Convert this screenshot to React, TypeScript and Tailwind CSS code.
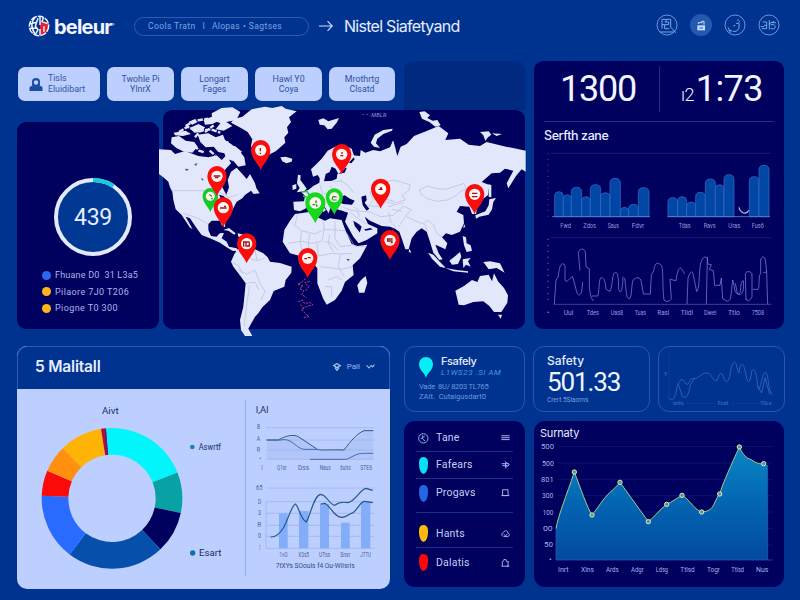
import React from "react";

type Label = [string, number, number, number];

/* Chart captions: text, left edge, baseline, width */
function Labels({ items, size, className }: { items: Label[]; size: number; className: string }) {
  return (
    <g className={className} fontSize={size} fontFamily="Roboto, sans-serif">
      {items.map(([t, x, y, w], i) => (
        <text key={i} x={x} y={y} textLength={w} lengthAdjust="spacingAndGlyphs">
          {t}
        </text>
      ))}
    </g>
  );
}

function Pin({ x, y, color = "#fb0d0d", s = 1, children }: { x: number; y: number; color?: string; s?: number; children?: React.ReactNode }) {
  return (
    <g transform={`translate(${x} ${y}) scale(${s})`}>
      <path d="M0 0C-6 -18 -29 -34 -29 -60A29 30 0 1 1 29 -60C29 -34 6 -18 0 0Z" fill={color} />
      <circle cx="0" cy="-59" r="17" fill="#fff4ee" />
      <g fill="none" stroke={color === "#fb0d0d" ? "#9b1420" : "#168a2a"} strokeWidth="4">
        {children}
      </g>
    </g>
  );
}

function WorldMap() {
  return (
    <svg viewBox="24 30 1086 657" className="block h-[219px] w-[362px] overflow-visible">
      <g fill="#e2e7fb">
        {/* North America */}
        <path d="M12 148L48 150 60 162 90 153 130 168 160 172 185 166 200 180 215 165 228 190 214 205 200 222 192 246 200 258 214 284 222 262 218 240 228 215 245 203 262 222 275 237 285 222 300 250 304 264 314 280 296 282 288 272 270 285 262 295 245 305 235 325 225 345 212 355 210 382 200 375 195 362 170 362 160 372 160 390 168 408 185 410 195 398 207 400 200 415 215 425 222 440 245 445 250 454 232 452 215 442 195 428 165 415 140 405 125 385 105 355 92 350 113 388 104 382 80 345 62 328 55 300 52 275 45 262 40 245 25 232 12 222Z" />
        {/* Arctic islands */}
        <path d="M50 112L72 108 92 122 118 126 128 140 112 158 84 154 64 144 48 130ZM56 98L92 92 108 102 84 108 60 106ZM104 84L130 72 150 82 142 96 118 98ZM146 60L176 48 196 60 172 72 150 74ZM170 40L200 24 232 22 256 36 244 60 214 66 232 78 206 92 182 88 196 70 172 60ZM128 104L160 100 182 112 204 104 210 120 228 132 250 148 268 172 272 196 250 200 236 184 214 176 208 160 190 156 176 140 152 142 136 126ZM210 142L240 138 262 156 240 162ZM100 66L118 58 128 66 112 74Z" />
        <path d="M72 96L98 80 122 92M92 78L120 62 160 56M120 112L136 92 168 88 196 98M150 96L176 76M118 136L132 152 150 158M164 152L180 166M60 128L80 132 104 148M196 120L220 128" fill="none" stroke="#e2e7fb" strokeWidth="7" strokeDasharray="16 4" />
        {/* Greenland and Iceland */}
        <path d="M228 68L238 56 262 50 290 28 330 20 352 24 380 18 392 26 425 34 402 52 408 66 396 82 400 98 388 112 391 128 376 142 362 154 340 165 330 186 318 200 306 180 300 160 288 138 292 118 278 96 258 84Z" />
        <path d="M376 172L392 170 412 176 410 185 394 190 382 184Z" />
        {/* Caribbean */}
        <path d="M205 390L222 384 242 400 238 404 220 392ZM248 400L268 404 270 412 250 410Z" />
        {/* South America */}
        <path d="M238 462L248 448 272 440 300 448 325 460 338 472 345 485 375 489 410 500 409 518 392 540 388 560 356 573 345 600 322 622 310 640 300 650 290 668 280 686 292 708 270 708 258 690 255 660 265 620 270 570 272 550 250 520 235 500 228 485Z" />
        {/* Africa and Madagascar */}
        <path d="M420 342L447 338 475 334 487 352 510 362 525 355 560 360 572 392 590 432 607 438 637 434 615 475 593 496 596 525 570 546 560 572 540 600 515 614 504 595 487 550 487 505 475 490 455 465 435 468 405 460 383 425 388 390 405 362Z" />
        <path d="M632 528L637 548 628 578 612 578 607 556 618 540Z" />
        {/* British Isles, Svalbard */}
        <path d="M429 224L437 226 436 240 448 256 455 266 447 274 425 277 434 264 426 250ZM412 256L424 252 424 266 413 270Z" />
        <path d="M490 60L505 55 520 64 552 54 545 68 530 86 518 88 508 76 494 74Z" />
        {/* Scandinavia */}
        <path d="M468 208L482 194 500 176 518 152 540 140 562 134 590 146 598 170 580 190 566 210 550 222 542 206 530 200 524 216 512 222 508 240 496 238 488 225 474 230Z" />
      </g>
      <g transform="translate(555 0)">
        <g fill="#e2e7fb">
          {/* Eurasia */}
          <path d="M-138 330L-140 305 -108 304 -105 288 -116 276 -95 270 -80 258 -62 248 -60 230 -50 232 -47 244 -24 242 -10 236 -8 222 14 218 20 204 2 200 10 184 34 190 44 178 38 166 60 168 62 150 76 158 100 150 120 154 150 142 158 124 148 128 160 122 166 144 172 168 182 140 200 132 222 108 258 94 296 78 325 100 316 120 360 116 386 134 420 138 440 126 498 140 530 146 557 152 557 215 545 208 530 225 505 265 500 250 520 212 495 206 480 218 455 220 425 246 448 255 444 285 425 300 412 322 408 342 396 342 388 320 360 318 350 335 370 345 372 370 360 395 335 405 318 400 306 412 322 430 316 448 300 440 286 434 296 460 308 478 298 480 280 458 270 425 260 395 245 385 230 395 215 415 206 448 196 448 188 424 178 395 165 386 150 380 125 378 90 362 74 350 84 372 112 385 112 400 80 420 56 430 40 410 15 365 24 338 0 330 -12 336 -28 322 -34 340 -48 318 -62 306 -42 330 -50 336 -74 310 -92 310 -104 326 -120 334Z" />
          {/* Novaya Zemlya, Severnaya Zemlya */}
          <path d="M92 128L104 104 130 90 158 86 156 92 130 102 112 116 108 130 120 144 102 140ZM238 36L254 34 270 46 262 54 278 62 292 60 302 76 286 80 268 66 246 56ZM420 96L446 94 454 104 444 112 436 122 430 106ZM456 100L486 102 470 108Z" />
          {/* Japan and Sakhalin */}
          <path d="M446 252L454 256 454 292 446 290ZM448 298L468 294 460 306 456 328 446 344 418 350 408 356 406 346 436 334 446 316Z" />
          {/* Islands of South-East Asia */}
          <path d="M264 458L280 464 300 486 318 504 300 500 276 476ZM316 504L350 510 384 514 384 518 340 514ZM328 482L346 468 360 456 364 470 354 492 336 494ZM368 408L378 412 380 430 392 436 396 452 380 456 372 436ZM368 478L392 474 384 484 392 500 378 494 370 504ZM430 486L450 484 480 490 494 518 470 504 446 508ZM208 446L214 458 206 456ZM372 372L376 380 370 384Z" />
          {/* Australia and Tasmania */}
          <path d="M346 572L372 558 396 540 412 546 420 528 446 524 456 544 462 520 474 544 492 564 504 586 502 608 484 636 462 636 448 618 430 604 400 606 372 616 356 614ZM474 644L486 644 482 656Z" />
        </g>
        {/* Inland seas and gulfs */}
        <g fill="#00005f">
          <path d="M-6 294L14 286 30 296 44 302 36 314 10 312-4 306ZM64 290L78 286 80 300 74 308 88 326 80 332 68 316ZM56 372L74 388 92 384 100 390 76 404 60 398 44 378 40 362ZM-24 322L-2 330-8 344-24 340ZM-44 236L-30 228-16 238-34 242Z" />
          <path d="M12 360L24 388 50 428 44 430 18 392 8 366Z" />
        </g>
        <path d="M66 376L76 392 100 388 108 392 78 408 58 402Z" fill="#e2e7fb" />
        <g fill="none" stroke="#b0b7d6" strokeWidth="1.800">
          <path d="M238 270L262 258 290 266 318 268 348 258 372 250 378 266 360 276 346 288 322 300 290 304 262 296 244 284ZM98 262L120 250 160 240 210 254 206 272 186 286 196 300 160 310 140 306 120 320 86 318 100 300 90 280ZM40 320L60 334 90 336 122 350 160 346 190 318 214 330 200 344 176 380M200 350L224 362 250 372 262 360 280 374 290 400 306 410M0 240L24 256 40 278M130 296L164 304M144 320L190 308M156 328L186 334M10 322L30 330 54 334 58 350M30 338L56 356 78 372M146 336L152 366 168 382M254 372L262 394M-60 256L-52 282-30 280M-30 256L-16 276 4 280M-20 246L6 242M-84 274L-72 292-52 298" />
        </g>
      </g>
      <g fill="none" stroke="#b0b7d6" strokeWidth="1.800">
        <path d="M50 272H160L200 280 222 292 248 284M84 340L110 348 130 356 150 366 160 374M250 510L276 522 300 510 316 552 330 574 318 600M274 550L300 546 312 570M272 456L284 476 306 482 330 474M232 488L250 496 262 520M300 450L306 480M284 556L274 620 268 680" />
        <path d="M412 370L440 392 480 402 508 388 540 390 572 392M428 344L420 372M504 362L508 388 500 424 470 430 440 424 400 430M540 364V416L556 440 590 436M486 430L490 468 530 460 560 462 592 460M508 424L530 430 550 452M495 500L530 504 560 508 592 500M520 540L544 530 562 540M510 560H530V590M556 462L550 500 568 530M440 392L436 430 444 460M464 402L460 430 462 466M576 400L600 440 630 440M524 404L520 430 536 456" />
      </g>
      <path d="M172 372L190 362 200 378 206 392 196 400 178 404 162 392ZM192 284L206 288 214 298 202 304Z" fill="#00005f" />
      <path d="M118 192L128 190 122 198ZM90 206L102 208 94 213ZM138 234L146 238 142 242ZM574 476L584 478 580 484Z" fill="#3f4c8c" />
      <path d="M452 536L438 548 428 552 444 558 434 566 446 572 440 584 454 592M464 544L450 548 462 560 452 572M430 606L442 600 448 610 466 608 474 614 454 620 440 628 450 640 462 650 446 652M436 614L446 624 440 630" fill="none" stroke="#b3447c" strokeWidth="3" strokeDasharray="7 3" />
      <text x="622" y="52" fontSize="17" fill="#8e9ad0" fontFamily="Roboto, sans-serif" fontStyle="italic" textLength="72">• • .MBLR</text>
      <path d="M442 276L456 274 462 284 476 282 478 296 462 300 470 310M444 288L458 292" fill="none" stroke="#14c932" strokeWidth="4" />
      <Pin x={317} y={210}><path d="M-1 -66V-56M-1 -52V-48" /></Pin>
      <Pin x={166} y={336} color="#16c828" s={0.8}><path d="M-4 -66L6 -58M2 -50H10" /></Pin>
      <Pin x={186} y={288}><path d="M-10 -60H10M-6 -55H4" /></Pin>
      <Pin x={205} y={382}><path d="M-10 -58H10M2 -63H8" /></Pin>
      <Pin x={275} y={490}><path d="M-9 -50V-64H9M-2 -62V-52H8V-62" /></Pin>
      <Pin x={458} y={534}><path d="M-10 -58H-2M0 -61H9" /></Pin>
      <Pin x={560} y={222}><path d="M1 -66V-60M-4 -55H5" /></Pin>
      <Pin x={538} y={344} color="#16d81c" s={0.88}><path d="M-8 -52L-4 -62 8 -60M-6 -50H8" /></Pin>
      <Pin x={481} y={370} color="#16d81c" s={1.04}><path d="M-8 -54H0M2 -66V-58M4 -54V-48" /></Pin>
      <Pin x={677} y={326}><path d="M-6 -58H6M-2 -62H4" /></Pin>
      <Pin x={705} y={480}><path d="M8 -63H-7V-57H8M2 -52H8" /></Pin>
      <Pin x={959} y={342}><path d="M-8 -62H8M-8 -52H8" /></Pin>
    </svg>
  );
}

const BASE = 290;
const BARS_A = [[74, 100, 215], [100, 124, 224], [124, 155, 202], [155, 181, 230], [181, 212, 194], [212, 240, 218], [240, 271, 175], [271, 296, 262], [296, 325, 253], [325, 357, 203]];
const BARS_B = [[414, 443, 233], [443, 470, 230], [470, 497, 246], [497, 526, 217], [526, 556, 177], [556, 582, 194], [582, 612, 164], [658, 687, 170], [687, 717, 136]];

function Bars({ data }: { data: number[][] }) {
  return (
    <g fill="#0046a4" stroke="#3f70cc" strokeWidth="2">
      {data.map(([a, b, t]) => (
        <path key={a} d={`M${a} ${BASE}V${t + 12}Q${a + 1} ${t} ${(a + b) / 2} ${t}Q${b - 1} ${t} ${b} ${t + 12}V${BASE}Z`} />
      ))}
    </g>
  );
}

function ZoneCharts() {
  return (
    <>
      <svg viewBox="12 84 750 258" className="block h-[86px] w-[250px] shrink-0">
        <path d="M62 100H722" stroke="#1b2f86" strokeWidth="2" />
        <path d="M54 100V290" stroke="#24318a" strokeWidth="5" strokeDasharray="3 14" />
        <Bars data={BARS_A} />
        <Bars data={BARS_B} />
        <path d="M66 290H360M412 290H720" stroke="#5f84d8" strokeWidth="2.5" />
        <path d="M627 262C632 282 650 284 657 271" fill="none" stroke="#a9c3f5" strokeWidth="3.500" />
        <Labels
          size={19}
          className="fill-[#8f9fd8]"
          items={[["Fwd", 91, 323, 32], ["Zdos", 160, 323, 38], ["Saus", 233, 323, 34], ["Fdvr", 305, 323, 38], ["Tdas", 446, 323, 36], ["Ravs", 521, 323, 36], ["Uras", 595, 323, 36], ["Fus6", 665, 323, 37]]}
        />
      </svg>
      <svg viewBox="12 342 750 258" className="block h-[86px] w-[250px] shrink-0">
        <path d="M62 353H724" stroke="#1b2f86" strokeWidth="2" />
        <path d="M54 356V550" stroke="#3a469c" strokeWidth="5" strokeDasharray="4 14" />
        <path d="M70 553H724" stroke="#4d63b8" strokeWidth="2" />
        <path
          d="M73 552L78 480 85 470C88 425 102 425 105 440V480C112 492 116 474 128 470L138 508C142 530 152 528 155 515L158 486M150 452L145 400C148 384 162 384 166 395L168 440 178 446V500C180 524 184 536 190 543M186 528H203C208 520 206 480 212 474 220 470 226 480 228 508L240 514C248 500 246 462 254 458 262 454 266 464 266 508 270 524 278 516 279 470M284 474C290 520 288 536 298 536 306 534 304 486 310 480 318 470 332 470 334 486L340 522H361L364 466 372 450C374 426 384 428 392 434 402 440 396 500 402 540 410 548 420 544 424 536L420 478 438 482C444 440 450 440 456 448L464 462M471 552L474 474C482 450 488 452 490 466L500 515C510 510 506 440 514 424 520 408 530 408 532 418L529 552M532 410C534 440 530 430 544 434L538 448 550 452 554 496H570L574 474 578 536C590 544 596 548 602 534L608 480C616 500 610 520 626 522 636 520 628 484 640 482 644 520 632 530 622 520L616 490M648 540L646 460C650 452 664 454 666 462V530C660 546 650 544 648 536M668 508H684C690 500 684 470 692 460V420C694 408 706 408 706 420L710 456 700 458M710 456L713 552"
          fill="none"
          stroke="#8a92dc"
          strokeWidth="2"
        />
        <Labels
          size={19}
          className="fill-[#8f9fe0]"
          items={[["•", 51, 586, 7], ["Uul", 101, 586, 29], ["Tdes", 170, 586, 37], ["Uas8", 242, 586, 37], ["Tuas", 314, 586, 34], ["Rasl", 382, 586, 36], ["Tlldl", 452, 586, 37], ["Dwel", 522, 586, 37], ["Ttlo", 594, 586, 36], ["7508", 665, 586, 37]]}
        />
      </svg>
    </>
  );
}

const SLICES: [number, number, string][] = [
  [-5, 68.5, "#00f6fb"],
  [68.5, 102, "#08a2a4"],
  [102, 136.5, "#00005f"],
  [136.5, 217, "#064fab"],
  [217, 272, "#2a6bff"],
  [272, 293, "#fb0a0a"],
  [293, 315.5, "#ff9010"],
  [315.5, 351, "#ffb405"],
  [351, 355, "#b00d3c"],
];

function ringSlice(from: number, to: number, cx: number, cy: number, R: number, r: number) {
  const p = (deg: number, q: number) => {
    const a = (deg * Math.PI) / 180;
    return `${(cx + q * Math.sin(a)).toFixed(1)} ${(cy - q * Math.cos(a)).toFixed(1)}`;
  };
  return `M${p(from, R)}A${R} ${R} 0 0 1 ${p(to, R)}L${p(to, r)}A${r} ${r} 0 0 0 ${p(from, r)}Z`;
}

function Donut() {
  return (
    <svg viewBox="21 147 684 597" className="block h-[199px] w-[228px] shrink-0">
      {SLICES.map(([a, b, c]) => (
        <path key={a} d={ringSlice(a, b, 306, 475, 211, 131)} fill={c} />
      ))}
      <path d="M286 267L292 345" stroke="#5a1a8c" strokeWidth="4" />
      <circle cx="547" cy="321" r="7" fill="#1684c4" />
      <circle cx="548" cy="639" r="8" fill="#1270a8" />
      <Labels size={25} className="fill-[#1b2c6b]" items={[["Aivt", 276, 223, 50], ["Aswrtf", 566, 330, 67], ["Esart", 567, 648, 67]]} />
    </svg>
  );
}

function MiniCharts() {
  return (
    <svg viewBox="45 147 435 597" className="block h-[199px] w-[145px] shrink-0">
      <path d="M46 180V708" stroke="#92a5dd" strokeWidth="3" />
      <Labels size={25} className="fill-[#1b2c6b]" items={[["I,AI", 77, 219, 39]]} />
      <path d="M112 300H160C180 286 205 284 222 300L262 330H342L402 272H430V358H112Z" fill="#a4bcf6" opacity="0.5" />
      <path d="M108 263H432M108 300H432M108 330H432M108 358H432M108 444H434M108 485H434M108 520H434M108 556H434M108 589H434M108 625H434M108 485V625" stroke="#9dafdc" strokeWidth="2" fill="none" />
      <g fill="none" stroke="#2a5a8c" strokeWidth="3">
        <path d="M110 300H145C165 288 190 282 205 290L262 328C280 332 290 328 342 330C365 300 380 282 402 272H430" />
        <path d="M110 300H150C185 292 195 322 220 328H262" stroke="#4a6cab" />
        <path d="M240 358H350L366 350C380 342 390 340 404 340H430" stroke="#4a6cab" />
      </g>
      <path d="M147 520H173V625H147ZM207 513H235V625H207ZM270 492H297V625H270ZM333 548H359V625H333ZM393 486H421V625H393Z" fill="#83adf8" />
      <g fill="none" stroke="#1f5788" strokeWidth="3.500">
        <path d="M122 591C140 592 150 580 160 564C174 540 184 498 196 492C206 498 212 540 229 546C240 530 252 464 272 463C290 464 296 492 314 496C324 488 334 484 354 488C378 482 392 446 408 445L428 451" />
        <path d="M272 492L286 490C306 506 316 534 336 532C350 530 360 520 370 518C388 500 394 482 404 484L428 488" />
      </g>
      <Labels
        size={19}
        className="fill-[#4a619f]"
        items={[["8", 80, 268, 10], ["A", 80, 302, 10], ["R", 80, 336, 10], ["•", 88, 362, 6], ["I", 94, 390, 4], ["Q1sr", 141, 390, 29], ["Dss", 204, 390, 33], ["Naus", 269, 390, 33], ["6ulss", 331, 390, 31], ["STE6", 391, 390, 35], ["65", 78, 451, 19], ["D", 84, 491, 10], ["3", 84, 526, 9], ["R", 82, 560, 12], ["0", 84, 595, 9], ["1", 86, 630, 6], ["1vO", 148, 652, 25], ["X3s5", 205, 652, 32], ["UTss", 267, 652, 33], ["Snsr", 331, 652, 30], ["JTTU", 391, 652, 32]]}
      />
      <Labels size={19} className="fill-[#33498a]" items={[["7tXYs SOouls f4 Ou-Wilsrls", 137, 684, 237]]} />
    </svg>
  );
}

function SummaryChart() {
  const dots = [[133, 171], [186, 300], [270, 202], [355, 320], [410, 268], [456, 241], [515, 291], [569, 237], [628, 96], [701, 146]];
  const line = "C85 300 110 240 133 171C150 215 172 280 186 300C200 284 222 248 238 234C252 222 262 212 270 202L355 320C372 308 392 280 410 268C424 262 440 250 456 241C476 250 492 284 515 291C534 290 546 282 552 268C560 252 562 244 569 237C580 200 604 150 628 96C640 122 650 130 664 134C676 144 690 148 701 146";
  return (
    <svg viewBox="12 78 750 435" className="block h-[145px] w-[250px] shrink-0">
      <defs>
        <linearGradient id="area" x1="0" y1="0" x2="0" y2="1">
          <stop offset="0" stopColor="#0a86c6" />
          <stop offset="0.45" stopColor="#0468b4" />
          <stop offset="1" stopColor="#0249a0" />
        </linearGradient>
      </defs>
      <path d="M84 95H728M84 144H728M84 193H728M84 242H728M84 291H728M84 341H728M84 390H728" stroke="#131c7a" strokeWidth="2" />
      <path d={`M78 435V341${line}L713 150V435Z`} fill="url(#area)" />
      <path d={`M78 341${line}`} fill="none" stroke="#9fcf80" strokeWidth="3" />
      <path d="M78 341V435H728M713 150V435" fill="none" stroke="#2a62b8" strokeWidth="2" />
      <g fill="#5c8f86" stroke="#d3f0c8" strokeWidth="3">
        {dots.map(([x, y]) => (
          <circle key={x} cx={x} cy={y} r="6.5" />
        ))}
      </g>
      <Labels
        size={20}
        className="fill-[#a5b4e8]"
        items={[["500", 33, 103, 39], ["500", 36, 152, 36], ["801", 33, 201, 38], ["300", 36, 250, 34], ["100", 38, 299, 32], ["00", 39, 348, 29], ["50", 42, 397, 27], ["•", 57, 440, 8], ["Inrt", 84, 470, 32], ["Xlns", 153, 470, 39], ["Ards", 228, 470, 38], ["Adgr", 303, 470, 38], ["Ldsg", 377, 470, 37], ["Ttlsd", 451, 470, 43], ["Togr", 531, 470, 39], ["Ttlsd", 604, 470, 38], ["Nus", 678, 470, 37]]}
      />
    </svg>
  );
}

function Chip({ a, b, w, icon }: { a: string; b: string; w: string; icon?: boolean }) {
  return (
    <div className={`flex h-[34px] items-center justify-center gap-[5px] rounded-[7px] bg-[#bccfff] ${w}`}>
      {icon && (
        <svg viewBox="0 0 14 16" className="h-4 w-3.5 shrink-0">
          <path d="M3 6a4 4 0 0 1 8 0v3a4 4 0 0 1-8 0Z" fill="#1a4da0" />
          <circle cx="7" cy="6.5" r="2.2" fill="#bccfff" />
          <path d="M0.5 15v-3a2 2 0 0 1 2-2l4.5 2 4.500-2a2 2 0 0 1 2 2v3Z" fill="#1a4da0" />
        </svg>
      )}
      <div className={`whitespace-nowrap text-[8.800px] leading-[10.500px] text-[#31539f] ${icon ? "-mt-px text-left" : "text-center"}`}>
        <div>{a}</div>
        <div>{b}</div>
      </div>
    </div>
  );
}

function Logo() {
  return (
    <svg viewBox="0 0 66 66" className="h-[22px] w-[22px] shrink-0">
      <path d="M36 22L60 20A31 31 0 0 1 46 60L36 56Z" fill="#e5232e" />
      <g fill="none" stroke="#eef4ff" strokeWidth="4.500">
        <circle cx="33" cy="33" r="29" strokeDasharray="19 3" strokeWidth="4.500" />
        <path d="M20 8C8 24 10 42 22 58M36 6V30M36 42V60M6 26L26 22 30 10M6 40H26M26 22L22 34 30 44 24 56M46 8L42 20 58 26M48 34V50" />
      </g>
    </svg>
  );
}

function HeaderIcon({ kind }: { kind: number }) {
  return (
    <svg viewBox="0 0 66 66" className="h-[22px] w-[22px]" fill="none" stroke="#7fa6e6" strokeWidth="3">
      {kind === 1 ? <circle cx="33" cy="33" r="33" fill="#2559b0" stroke="none" /> : <circle cx="33" cy="33" r="30" strokeWidth="2.500" />}
      {kind === 0 && <path d="M18 16V44M18 16H44V40M26 24H38V32H26V44H40M12 54H54M44 40L60 56M30 16V24M18 32H26" />}
      {kind === 1 && (
        <>
          <path d="M22 34H45V49H22Z" fill="#c9dcff" stroke="none" />
          <path d="M25 30V26H38M34 22H42V32" stroke="#c9dcff" />
          <path d="M28 42H39" stroke="#2559b0" />
        </>
      )}
      {kind === 2 && <path d="M42 16V22M36 28H45V44L36 52H26M14 50H24M28 36L34 34M48 22L44 26M12 40L20 56" />}
      {kind === 3 && <path d="M14 24H26V44H12M18 34H26M34 18V46M32 30L48 22M38 44C54 48 56 34 46 32H38M8 38H18M42 26H54" />}
    </svg>
  );
}

const MENU: { name: string; h: string; color?: string; icon: string }[] = [
  { name: "Tane", h: "h-[27px]", icon: "M1 5H27M1 11H27M1 17H27" },
  { name: "Fafears", h: "h-[27px]", color: "bg-[#08dfee]", icon: "M2 8H24M12 1L26 11L12 22M14 6V18M4 14H20" },
  { name: "Progavs", h: "h-[34px] pb-[5px]", color: "bg-[#2467e6]", icon: "M5 2H22V20H5ZM1 20H26" },
  { name: "Hants", h: "h-[35px] pt-[7px]", color: "bg-[#ffb90c]", icon: "M5 19C-2 12 6 8 8 7C12 -2 22 2 20 8C28 10 28 18 21 20H8M8 13L14 17L20 13" },
  { name: "Dalatis", h: "h-[29px]", color: "bg-[#fb0808]", icon: "M4 22V8L9 5M22 8V22H2M9 5V1H15L18 8H24M18 22H26" },
];

export default function App() {
  return (
    <div className="flex h-[600px] w-[800px] flex-col overflow-hidden bg-[#00338f] font-['Roboto',sans-serif] text-[#e6edff]">
      <header className="flex h-[61px] shrink-0 items-center pb-[9px] pl-7 pr-[20px]">
        <Logo />
        <div className="ml-1 w-[66px] whitespace-nowrap font-['Inter',sans-serif] text-[20px] font-bold leading-6 tracking-[-0.8px] text-[#f1f5ff]">
          beleur<span className="align-super text-[4px] font-normal">®</span>
        </div>
        <div className="ml-[14px] flex h-[19px] w-[175px] items-center gap-[7px] whitespace-nowrap rounded-full border border-[#2a5cb4] pl-[13px] text-[8.500px] text-[#7fa3e0]">
          <span className="tracking-[0.4px]">Cools Tratn</span>
          <span>I</span>
          <span className="tracking-[0.3px]">Alopas</span>
          <span className="-mx-1">•</span>
          <span className="tracking-[0.4px]">Sagtses</span>
        </div>
        <svg viewBox="0 0 14 12" className="ml-[10px] h-3 w-3.5 shrink-0" fill="none" stroke="#cfdcff" strokeWidth="1.100">
          <path d="M0 6H13M8.500 1.200L13.200 6L8.500 10.800" />
        </svg>
        <h1 className="ml-[11px] whitespace-nowrap font-['Inter',sans-serif] text-[16px] leading-5 tracking-[-0.72px]">Nistel Siafetyand</h1>
        <div className="ml-auto flex gap-[12px] pb-[3px]">
          <HeaderIcon kind={0} />
          <HeaderIcon kind={1} />
          <HeaderIcon kind={2} />
          <HeaderIcon kind={3} />
        </div>
      </header>

      <div className="flex h-[268px] shrink-0 gap-[9px] pl-[17px]">
        <div className="flex w-[508px] flex-col">
          <div className="flex h-[49px] shrink-0 justify-between">
            <div className="flex gap-[7px] pl-px pt-[6px]">
              <Chip a="Tisls" b="Eluidibart" w="w-[82px] pr-1" icon />
              <Chip a="Twohle Pi" b="YlnrX" w="w-[67px]" />
              <Chip a="Longart" b="Fages" w="w-[67px]" />
              <Chip a="Hawl Y0" b="Coya" w="w-[67px]" />
              <Chip a="Mrothrtg" b="Clsatd" w="w-[66px]" />
            </div>
            <div className="w-[121px] rounded-t-[9px] bg-[#00297f]" />
          </div>
          <div className="flex h-[219px] items-end gap-1">
            <section className="flex h-[207px] w-[142px] flex-col items-center rounded-[9px] bg-[#00005f]">
              <div className="mr-[-10px] mt-[56px] grid h-[78px] w-[78px] place-items-center rounded-full border-4 border-[#e4e9fb] bg-[#003894]">
                <span className="text-[23px] leading-none tracking-[-0.200px]">439</span>
              </div>
              <svg viewBox="0 0 78 78" className="-mt-[78px] mr-[-10px] h-[78px] w-[78px] shrink-0">
                <path d="M39 2A37 37 0 0 1 59.500 8.200" fill="none" stroke="#0dcfe0" strokeWidth="4" />
              </svg>
              <ul className="mt-[11px] w-full pl-[25px] text-[9px] leading-[16.6px] text-[#a9b8e6]">
                <li className="flex items-center gap-[4px]"><i className="h-[9px] w-[9px] rounded-full bg-[#2a6af0]" /><span className="tracking-[0.2px]">Fhuane D0 &nbsp;31 L3a5</span></li>
                <li className="flex items-center gap-[4px]"><i className="h-[9px] w-[9px] rounded-full bg-[#ffb51a]" /><span className="tracking-[0.4px]">Pilaore 7J0 T206</span></li>
                <li className="flex items-center gap-[4px]"><i className="h-[9px] w-[9px] rounded-full bg-[#ffb51a]" /><span className="tracking-[0.4px]">Piogne T0 300</span></li>
              </ul>
            </section>
            <section className="h-[219px] w-[362px] rounded-[9px] bg-[#00005f]">
              <WorldMap />
            </section>
          </div>
        </div>

        <section className="flex w-[250px] flex-col rounded-[9px] bg-[#00005f]">
          <div className="mx-[10px] flex h-[61px] shrink-0 items-center border-b border-[#1c3186] pb-1 text-[36px] leading-none text-[#f1f5ff]">
            <div className="w-[115px] pl-[16px] tracking-[-1.2px]">1300</div>
            <div className="h-[46px] w-px bg-[#1c3186]" />
            <div className="flex items-baseline pl-[21px] tracking-[-0.6px]">
              <span className="mr-[2px] text-[18px] font-light">ı2</span>1:73
            </div>
          </div>
          <h2 className="h-[26px] shrink-0 pl-[10px] pt-[5px] font-['Inter',sans-serif] text-[12.500px] font-medium leading-[18px] tracking-[-0.4px]">Serfth zane</h2>
          <ZoneCharts />
        </section>
      </div>

      <div className="flex gap-[14px] pl-[17px] pt-[17px]">
        <section className="flex h-[243px] w-[373px] shrink-0 flex-col overflow-hidden rounded-[10px] bg-[#bccfff]">
          <div className="flex h-[43px] shrink-0 items-center justify-between rounded-t-[10px] border border-b-0 border-[#2a5cb4] bg-[#00338f] pb-[3px] pl-[17px] pr-[14px]">
            <h2 className="font-['Inter',sans-serif] text-[15.500px] font-semibold leading-5 tracking-[-0.2px]">5 Malitall</h2>
            <div className="flex items-center gap-[6px] text-[8px] text-[#9db9ee]">
              <svg viewBox="0 0 24 24" className="h-2 w-2" fill="none" stroke="#9db9ee" strokeWidth="4">
                <path d="M2 8L12 2L22 8L12 14ZM6 14L12 22L18 14" />
              </svg>
              <span>Pall</span>
              <svg viewBox="0 0 24 14" className="h-[5px] w-[9px]" fill="none" stroke="#9db9ee" strokeWidth="3">
                <path d="M1 4L8 11L14 4L18 8L23 2" />
              </svg>
            </div>
          </div>
          <div className="flex">
            <Donut />
            <MiniCharts />
          </div>
        </section>

        <div className="flex flex-col gap-[9px]">
          <div className="flex gap-[8px]">
            <section className="flex h-[66px] w-[121px] flex-col rounded-[11px] border border-[#2458b2] pl-[14px] pt-[8px]">
              <div className="flex gap-[8px]">
                <svg viewBox="0 0 42 63" className="mt-[2px] h-[21px] w-3.5 shrink-0">
                  <path d="M21 63C18 48 0 40 0 21A21 21 0 0 1 42 21C42 40 24 48 21 63Z" fill="#08eef6" />
                </svg>
                <div className="whitespace-nowrap">
                  <div className="font-['Inter',sans-serif] text-[11px] font-medium leading-[13px] tracking-[-0.4px]">Fsafely</div>
                  <div className="text-[8px] italic leading-[10px] tracking-[0.550px] text-[#3f9be0]">L1WS23 .SI AM</div>
                </div>
              </div>
              <div className="mt-[4px] whitespace-nowrap text-[7.500px] leading-[9.500px] text-[#6f97dc]">
                <div className="tracking-[-0.250px]">Vade &nbsp;8U/ 8203 TL765</div>
                <div>ZAIt. &nbsp;Cutaigusdart0</div>
              </div>
            </section>
            <section className="flex h-[66px] w-[117px] flex-col rounded-[11px] border border-[#2458b2] pl-[13px] pt-[7px]">
              <h3 className="font-['Inter',sans-serif] text-[12px] font-medium leading-[14px]">Safety</h3>
              <div className="text-[26px] leading-[28px] tracking-[-1.100px] text-[#f1f5ff]">501.33</div>
              <div className="text-[6.500px] leading-[8px] text-[#7d9fdf]">Crert 5Slaoms</div>
            </section>
            <section className="h-[66px] w-[127px] rounded-[11px] border border-[#2458b2]">
              <svg viewBox="778 18 375 192" className="block h-[64px] w-[125px]">
                <g fill="none" stroke="#356cbf" strokeWidth="2.400">
                  <path d="M806 170C822 190 828 160 832 140C838 112 850 112 856 124C866 144 868 112 880 112C894 116 902 98 920 96C936 94 940 124 952 118C962 92 966 90 972 112C982 132 990 118 994 84C1000 56 1010 60 1012 80L1018 96C1022 60 1030 64 1036 88C1042 130 1050 134 1056 92C1062 76 1070 88 1074 136C1082 164 1086 92 1098 94C1108 100 1104 150 1118 160" />
                  <path d="M836 130L848 166C860 174 866 164 872 132L884 112M1074 136L1086 156 1096 110 1110 160" />
                  <path d="M808 32V170M862 187H948M1000 187H1076" stroke="#1b4ea6" strokeDasharray="4 4" />
                </g>
                <Labels size={14} className="fill-[#4478c8]" items={[["Iarths", 820, 191, 32], ["Fost", 954, 191, 32], ["TiSs.w", 1082, 191, 34], ["Y", 793, 106, 10]]} />
              </svg>
            </section>
          </div>

          <div className="flex gap-[9px]">
            <section className="flex h-[166px] w-[121px] flex-col rounded-[11px] bg-[#00005f] px-3 pt-[4px]">
              {MENU.map((m, i) => (
                <div key={m.name} className={`flex shrink-0 items-center pl-[2px] ${m.h} ${i < MENU.length - 1 ? "border-b border-[#1c3186]" : ""}`}>
                  {m.color ? (
                    <span className={`ml-[1px] h-[17px] w-[9px] rounded-[4.5px_4.5px_4.5px_4.5px/5px_5px_10px_10px] ${m.color}`} />
                  ) : (
                    <svg viewBox="0 0 33 33" className="h-[11px] w-[11px]" fill="none" stroke="#8fb0ea" strokeWidth="3">
                      <circle cx="16" cy="16" r="14" />
                      <path d="M14 7V18L21 24M20 8L16 13M8 16H13" />
                    </svg>
                  )}
                  <span className={`text-[10.500px] leading-3 tracking-[0.2px] text-[#c3cff3] ${m.color ? "ml-[8px]" : "ml-[7px]"}`}>{m.name}</span>
                  <svg viewBox="0 0 28 24" className="ml-auto mr-[3px] h-2 w-[9px]" fill="none" stroke="#a5b9ee" strokeWidth="3">
                    <path d={m.icon} />
                  </svg>
                </div>
              ))}
            </section>
            <section className="flex h-[166px] w-[250px] flex-col rounded-[11px] bg-[#00005f]">
              <h2 className="h-5 shrink-0 pl-[6px] pt-[4px] font-['Inter',sans-serif] text-[11px] leading-4 tracking-[-0.2px]">Surnaty</h2>
              <SummaryChart />
            </section>
          </div>
        </div>
      </div>
    </div>
  );
}
